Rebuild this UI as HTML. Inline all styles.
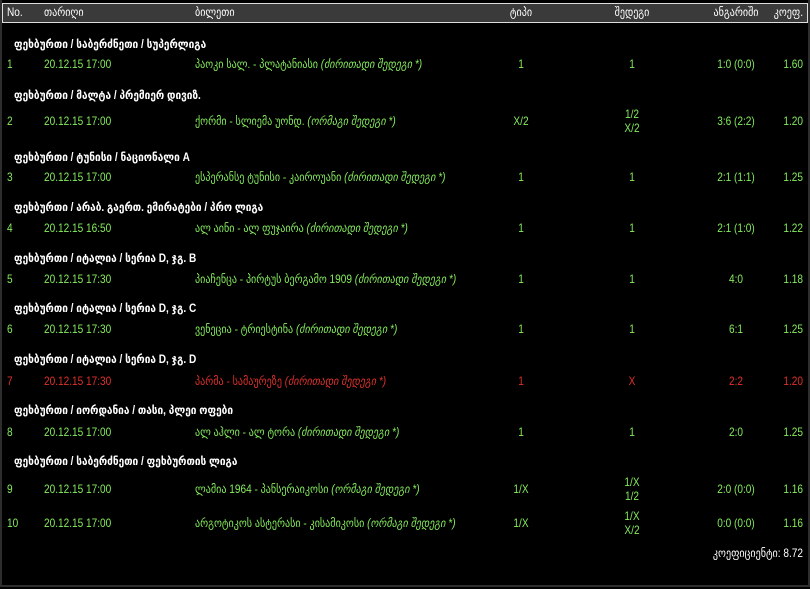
<!DOCTYPE html>
<html><head><meta charset="utf-8"><style>
html,body{margin:0;padding:0;background:#000;}
body{width:810px;height:589px;position:relative;overflow:hidden;font-family:"Liberation Sans","DejaVu Sans",sans-serif;font-size:12px;color:#84ec5c;}
.frame{position:absolute;left:0;top:0;width:806px;height:585px;border:2px solid #2e2e2e;border-top:none;}
.hdr{position:absolute;left:2px;top:3px;width:804px;height:18px;background:#3a3a3a;border:1px solid #ddd;color:#fff;}
.t{position:absolute;white-space:nowrap;line-height:12px;transform:scaleX(.84);transform-origin:left center;}
.c{transform:translateX(-50%) scaleX(.84);transform-origin:center center;text-align:center;}
.r{transform:translateX(-100%) scaleX(.84);transform-origin:right center;}
.w{color:#fff;font-weight:bold;}
.i{font-style:italic;}
.red{color:#e0302a;}
</style></head><body>
<div class="frame"></div>
<div class="hdr"></div>
<div class="t w" style="left:7px;top:6px;font-weight:normal">No.</div>
<div class="t w" style="left:44px;top:6px;font-weight:normal">თარიღი</div>
<div class="t w" style="left:195px;top:6px;font-weight:normal">ბილეთი</div>
<div class="t w c" style="left:521px;top:6px;font-weight:normal">ტიპი</div>
<div class="t w c" style="left:632px;top:6px;font-weight:normal">შედეგი</div>
<div class="t w c" style="left:736px;top:6px;font-weight:normal">ანგარიში</div>
<div class="t w r" style="left:803px;top:6px;font-weight:normal">კოეფ.</div>

<div class="t w" style="left:14px;top:38px">ფეხბურთი / საბერძნეთი / სუპერლიგა</div>
<div class="t" style="left:7px;top:58px">1</div><div class="t" style="left:44px;top:58px">20.12.15 17:00</div>
<div class="t" style="left:195px;top:58px">პაოკი სალ. - პლატანიასი <span class="i">(ძირითადი შედეგი *)</span></div>
<div class="t c" style="left:521px;top:58px">1</div><div class="t c" style="left:632px;top:58px">1</div><div class="t c" style="left:736px;top:58px">1:0 (0:0)</div><div class="t r" style="left:803px;top:58px">1.60</div>

<div class="t w" style="left:14px;top:89px">ფეხბურთი / მალტა / პრემიერ დივიზ.</div>
<div class="t" style="left:7px;top:115px">2</div><div class="t" style="left:44px;top:115px">20.12.15 17:00</div>
<div class="t" style="left:195px;top:115px">ქორმი - სლიემა უონდ. <span class="i">(ორმაგი შედეგი *)</span></div>
<div class="t c" style="left:521px;top:115px">X/2</div><div class="t c" style="left:632px;top:108px;line-height:14px;top:107px">1/2<br>X/2</div><div class="t c" style="left:736px;top:115px">3:6 (2:2)</div><div class="t r" style="left:803px;top:115px">1.20</div>

<div class="t w" style="left:14px;top:151px">ფეხბურთი / ტუნისი / ნაციონალი A</div>
<div class="t" style="left:7px;top:171px">3</div><div class="t" style="left:44px;top:171px">20.12.15 17:00</div>
<div class="t" style="left:195px;top:171px">ესპერანსე ტუნისი - კაიროუანი <span class="i">(ძირითადი შედეგი *)</span></div>
<div class="t c" style="left:521px;top:171px">1</div><div class="t c" style="left:632px;top:171px">1</div><div class="t c" style="left:736px;top:171px">2:1 (1:1)</div><div class="t r" style="left:803px;top:171px">1.25</div>

<div class="t w" style="left:14px;top:201px">ფეხბურთი / არაბ. გაერთ. ემირატები / პრო ლიგა</div>
<div class="t" style="left:7px;top:222px">4</div><div class="t" style="left:44px;top:222px">20.12.15 16:50</div>
<div class="t" style="left:195px;top:222px">ალ აინი - ალ ფუჯაირა <span class="i">(ძირითადი შედეგი *)</span></div>
<div class="t c" style="left:521px;top:222px">1</div><div class="t c" style="left:632px;top:222px">1</div><div class="t c" style="left:736px;top:222px">2:1 (1:0)</div><div class="t r" style="left:803px;top:222px">1.22</div>

<div class="t w" style="left:14px;top:252px">ფეხბურთი / იტალია / სერია D, ჯგ. B</div>
<div class="t" style="left:7px;top:273px">5</div><div class="t" style="left:44px;top:273px">20.12.15 17:30</div>
<div class="t" style="left:195px;top:273px">პიაჩენცა - პირტუს ბერგამო 1909 <span class="i">(ძირითადი შედეგი *)</span></div>
<div class="t c" style="left:521px;top:273px">1</div><div class="t c" style="left:632px;top:273px">1</div><div class="t c" style="left:736px;top:273px">4:0</div><div class="t r" style="left:803px;top:273px">1.18</div>

<div class="t w" style="left:14px;top:302px">ფეხბურთი / იტალია / სერია D, ჯგ. C</div>
<div class="t" style="left:7px;top:323px">6</div><div class="t" style="left:44px;top:323px">20.12.15 17:30</div>
<div class="t" style="left:195px;top:323px">ვენეცია - ტრიესტინა <span class="i">(ძირითადი შედეგი *)</span></div>
<div class="t c" style="left:521px;top:323px">1</div><div class="t c" style="left:632px;top:323px">1</div><div class="t c" style="left:736px;top:323px">6:1</div><div class="t r" style="left:803px;top:323px">1.25</div>

<div class="t w" style="left:14px;top:353px">ფეხბურთი / იტალია / სერია D, ჯგ. D</div>
<div class="red">
<div class="t" style="left:7px;top:375px">7</div><div class="t" style="left:44px;top:375px">20.12.15 17:30</div>
<div class="t" style="left:195px;top:375px">პარმა - სამაურეზე <span class="i">(ძირითადი შედეგი *)</span></div>
<div class="t c" style="left:521px;top:375px">1</div><div class="t c" style="left:632px;top:375px">X</div><div class="t c" style="left:736px;top:375px">2:2</div><div class="t r" style="left:803px;top:375px">1.20</div>
</div>

<div class="t w" style="left:14px;top:404px">ფეხბურთი / იორდანია / თასი, პლეი ოფები</div>
<div class="t" style="left:7px;top:426px">8</div><div class="t" style="left:44px;top:426px">20.12.15 17:00</div>
<div class="t" style="left:195px;top:426px">ალ აჰლი - ალ ტორა <span class="i">(ძირითადი შედეგი *)</span></div>
<div class="t c" style="left:521px;top:426px">1</div><div class="t c" style="left:632px;top:426px">1</div><div class="t c" style="left:736px;top:426px">2:0</div><div class="t r" style="left:803px;top:426px">1.25</div>

<div class="t w" style="left:14px;top:455px">ფეხბურთი / საბერძნეთი / ფეხბურთის ლიგა</div>
<div class="t" style="left:7px;top:483px">9</div><div class="t" style="left:44px;top:483px">20.12.15 17:00</div>
<div class="t" style="left:195px;top:483px">ლამია 1964 - პანსერაიკოსი <span class="i">(ორმაგი შედეგი *)</span></div>
<div class="t c" style="left:521px;top:483px">1/X</div><div class="t c" style="left:632px;top:475px;line-height:14px">1/X<br>1/2</div><div class="t c" style="left:736px;top:483px">2:0 (0:0)</div><div class="t r" style="left:803px;top:483px">1.16</div>

<div class="t" style="left:7px;top:517px">10</div><div class="t" style="left:44px;top:517px">20.12.15 17:00</div>
<div class="t" style="left:195px;top:517px">არგოტიკოს ასტერასი - კისამიკოსი <span class="i">(ორმაგი შედეგი *)</span></div>
<div class="t c" style="left:521px;top:517px">1/X</div><div class="t c" style="left:632px;top:509px;line-height:14px">1/X<br>X/2</div><div class="t c" style="left:736px;top:517px">0:0 (0:0)</div><div class="t r" style="left:803px;top:517px">1.16</div>

<div class="t r" style="left:803px;top:547px;color:#fff">კოეფიციენტი: 8.72</div>
</body></html>
